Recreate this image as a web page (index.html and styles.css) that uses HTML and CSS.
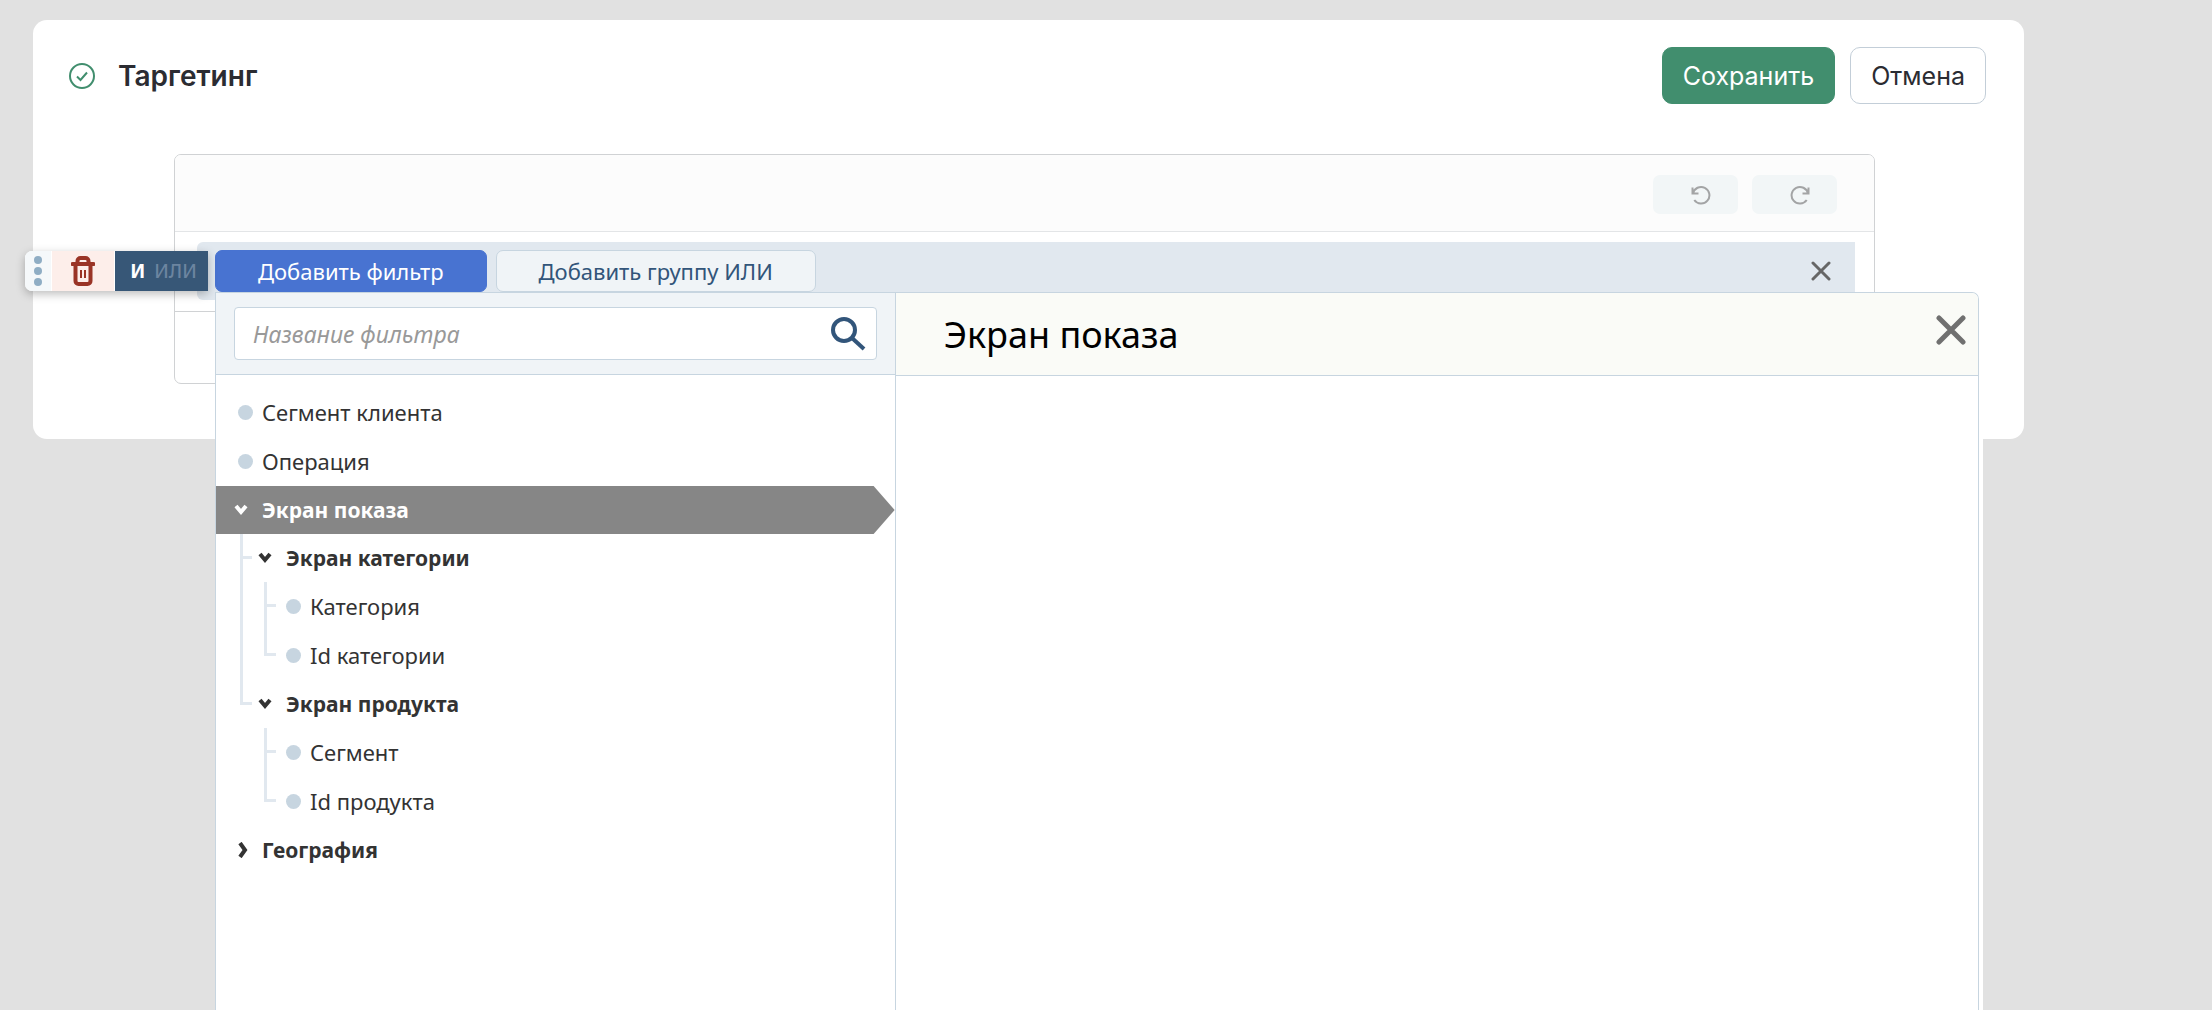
FILE: index.html
```html
<!DOCTYPE html>
<html lang="ru">
<head>
<meta charset="utf-8">
<title>Таргетинг</title>
<link rel="stylesheet" href="styles.css">
</head>
<body>
<main class="card">
  <header class="card-header">
    <svg class="status-icon" viewBox="0 0 26 26" aria-hidden="true"><circle cx="13" cy="13" r="12"/><path d="M8 13.5l3.5 3.5L18 9.5"/></svg>
    <h1 class="card-title">Таргетинг</h1>
    <div class="card-actions">
      <button class="btn btn-save" type="button">Сохранить</button>
      <button class="btn btn-cancel" type="button">Отмена</button>
    </div>
  </header>

  <section class="panel">
    <div class="panel-bar">
      <button class="history-btn" type="button" aria-label="Назад">
        <svg viewBox="0 0 20 20"><path d="M1.500 2.500v6h6M2 8.500A8.300 8.300 0 1 1 3.300 15"/></svg>
      </button>
      <button class="history-btn" type="button" aria-label="Вперёд">
        <svg viewBox="0 0 20 20"><path d="M18.500 2.500v6h-6M18 8.500A8.300 8.300 0 1 0 16.700 15"/></svg>
      </button>
    </div>

    <div class="panel-body">
      <div class="group">
        <button class="group-btn group-btn-primary" type="button">Добавить фильтр</button>
        <button class="group-btn" type="button">Добавить группу ИЛИ</button>
        <button class="group-close" type="button" aria-label="Закрыть">
          <svg viewBox="0 0 20 20"><path d="M2 2l16 16M18 2L2 18"/></svg>
        </button>

        <div class="tools">
          <button class="tool tool-grip" type="button" aria-label="Переместить">
            <svg viewBox="0 0 8 30"><circle cx="4" cy="4" r="4"/><circle cx="4" cy="15" r="4"/><circle cx="4" cy="26" r="4"/></svg>
          </button>
          <button class="tool tool-delete" type="button" aria-label="Удалить">
            <svg viewBox="0 0 24 30"><path class="bin" d="M1.500 8h21M4.500 8v17a3 3 0 0 0 3 3h9a3 3 0 0 0 3-3V8M6.500 7V5a3 3 0 0 1 3-3h5a3 3 0 0 1 3 3v2"/><path class="slats" d="M10 14v8M14 14v8"/></svg>
          </button>
          <button class="tool tool-logic" type="button"><b>И</b><span>ИЛИ</span></button>
        </div>

        <div class="picker">
          <div class="picker-side">
            <div class="search">
              <label class="search-box">
                <input class="search-input" type="text" placeholder="Название фильтра" aria-label="Название фильтра">
                <svg class="search-icon" viewBox="0 0 36 34" aria-hidden="true"><circle cx="13" cy="13" r="11"/><path d="M21 21l12 11"/></svg>
              </label>
            </div>
            <ul class="tree">
              <li><div class="row"><i class="mark dot"></i>Сегмент клиента</div></li>
              <li><div class="row"><i class="mark dot"></i>Операция</div></li>
              <li>
                <div class="row row-parent row-selected"><svg class="mark" viewBox="0 0 28 16"><path d="M2 4l5 6 5-6"/></svg>Экран показа</div>
                <ul class="branch">
                  <li>
                    <div class="row row-parent"><svg class="mark" viewBox="0 0 28 16"><path d="M2 4l5 6 5-6"/></svg>Экран категории</div>
                    <ul class="branch">
                      <li><div class="row"><i class="mark dot"></i>Категория</div></li>
                      <li><div class="row"><i class="mark dot"></i>Id категории</div></li>
                    </ul>
                  </li>
                  <li>
                    <div class="row row-parent"><svg class="mark" viewBox="0 0 28 16"><path d="M2 4l5 6 5-6"/></svg>Экран продукта</div>
                    <ul class="branch">
                      <li><div class="row"><i class="mark dot"></i>Сегмент</div></li>
                      <li><div class="row"><i class="mark dot"></i>Id продукта</div></li>
                    </ul>
                  </li>
                </ul>
              </li>
              <li><div class="row row-parent"><svg class="mark" viewBox="0 0 28 16"><path d="M6 1l5 7-5 7"/></svg>География</div></li>
            </ul>
          </div>
          <div class="picker-main">
            <header class="picker-header">
              <h2 class="picker-title">Экран показа</h2>
              <button class="picker-close" type="button" aria-label="Закрыть">
                <svg viewBox="0 0 30 30"><path d="M3 3l24 24M27 3L3 27"/></svg>
              </button>
            </header>
          </div>
        </div>
      </div>
    </div>
    <div class="panel-footer"></div>
  </section>
</main>
</body>
</html>
```
FILE: styles.css
```css
* {
  box-sizing: border-box;
}

body {
  margin: 0;
  min-height: 100vh;
  background: #e1e1e1;
  color: #333;
  font-family: "Noto Sans", sans-serif;
  font-size: 22px;
  overflow: hidden;
}

button {
  padding: 0;
  border: 0;
  background: none;
  color: inherit;
  font: inherit;
  cursor: pointer;
}

svg {
  display: block;
  fill: none;
  stroke: currentColor;
}

ul {
  margin: 0;
  padding: 0;
  list-style: none;
}

.card {
  margin: 20px 188px 0 33px;
  padding: 27px 0 55px;
  border-radius: 14px;
  background: #fff;
}

.card-header {
  display: flex;
  align-items: center;
  height: 57px;
  padding: 0 38px 0 36px;
  font-family: Inter, sans-serif;
}

.status-icon {
  width: 26px;
  height: 26px;
  color: #418e6e;
  stroke-width: 2;
}

.card-title {
  margin: 0 0 0 23px;
  color: #2b2c32;
  font-size: 28px;
  font-weight: 600;
}

.card-actions {
  display: flex;
  gap: 15px;
  margin-left: auto;
}

.btn {
  height: 57px;
  padding: 0 20px;
  border: 1px solid #c3ced8;
  border-radius: 10px;
  color: #2b2c32;
  font-size: 25px;
}

.btn-save {
  border-color: #418e6e;
  background: #418e6e;
  color: #fff;
}

.panel {
  margin: 50px 149px 0 141px;
  border: 1px solid #d0d2d4;
  border-radius: 7px;
}

.panel-bar {
  display: flex;
  align-items: center;
  justify-content: flex-end;
  gap: 14px;
  height: 77px;
  padding: 3px 37px 0 0;
  border-bottom: 1px solid #e3e5e7;
  border-radius: 6px 6px 0 0;
  background: #fcfcfc;
}

.history-btn {
  width: 85px;
  height: 39px;
  padding-left: 38px;
  border-radius: 7px;
  background: #f2f6f7;
  color: #a3a4a5;
}

.history-btn svg {
  width: 20px;
  height: 20px;
  stroke-width: 2;
}

.panel-body {
  padding: 10px 19px 11px 22px;
  border-bottom: 1px solid #d0d2d4;
}

.panel-footer {
  height: 71px;
}

.group {
  position: relative;
  display: flex;
  gap: 9px;
  height: 58px;
  padding: 8px 24px 8px 18px;
  border-radius: 6px 0 0 6px;
  background: #e1e8ef;
}

.group-btn {
  height: 42px;
  padding: 0 42px;
  border: 1px solid #c7d5e0;
  border-radius: 7px;
  background: #f0f4f7;
  color: #32557a;
}

.group-btn-primary {
  border-color: #4873d1;
  background: #4873d1;
  color: #fff;
}

.group-close {
  width: 20px;
  height: 42px;
  margin-left: auto;
  color: #666;
}

.group-close svg {
  stroke-width: 3;
  stroke-linecap: round;
}

.tools {
  position: absolute;
  top: 9px;
  left: -172px;
  display: flex;
  width: 183px;
  height: 40px;
  border-radius: 7px 0 0 7px;
  background: #fff;
  box-shadow: 0 3px 10px #0004;
}

.tool {
  display: flex;
  align-items: center;
  justify-content: center;
}

.tool-grip {
  width: 26px;
  margin-right: 1px;
  border-radius: 7px 0 0 7px;
  background: #f5f8fa;
}

.tool-grip svg {
  width: 8px;
  height: 30px;
  fill: #8fadc4;
  stroke: none;
}

.tool-delete {
  width: 62px;
  margin-right: 1px;
  background: #fdeeea;
  color: #9a3426;
}

.tool-delete svg {
  width: 24px;
  height: 30px;
}

.bin {
  stroke-width: 4;
  stroke-linecap: round;
}

.slats {
  stroke-width: 2;
}

.tool-logic {
  flex: 1;
  gap: 9px;
  padding-left: 4px;
  background: #375777;
  color: #fff;
  font-size: 19px;
}

.tool-logic span {
  color: #6c85a0;
  font-weight: 500;
}

.picker {
  position: absolute;
  top: 50px;
  right: -124px;
  left: 18px;
  display: grid;
  grid-template-columns: 27fr 43fr;
  height: calc(100vh - 292px);
  border: 1px solid #c7d5e0;
  border-bottom: 0;
  border-radius: 0 7px 0 0;
  background: #fff;
  box-shadow: 4px 0 0 #fff;
}

.picker-side {
  border-right: 1px solid #c7d5e0;
}

.search {
  height: 82px;
  padding: 14px 18px;
  border-bottom: 1px solid #c7d5e0;
  background: #f0f4f7;
}

.search-box {
  display: flex;
  align-items: center;
  height: 53px;
  padding: 0 9px 0 18px;
  border: 1px solid #c7d5e0;
  border-radius: 4px;
  background: #fff;
}

.search-input {
  flex: 1;
  min-width: 0;
  padding: 0;
  border: 0;
  outline: 0;
  background: none;
  color: #333;
  font: italic 23px "Noto Sans", sans-serif;
}

.search-input::placeholder {
  color: #999;
}

.search-icon {
  width: 36px;
  height: 34px;
  color: #32557a;
  stroke-width: 4;
}

.tree {
  padding-top: 13px;
}

.tree li + li {
  margin-top: 1px;
}

.row {
  display: flex;
  align-items: center;
  height: 48px;
  padding-left: 18px;
}

.row-parent {
  font-size: 21px;
  font-weight: 700;
}

.row-selected {
  background: #868686;
  clip-path: polygon(0 0, calc(100% - 21px) 0, 100% 50%, calc(100% - 21px) 100%, 0 100%);
  color: #fff;
}

.mark {
  width: 28px;
  height: 16px;
  stroke-width: 4;
}

.dot {
  display: flex;
  align-items: center;
  padding-left: 4px;
}

.dot::before {
  content: "";
  width: 15px;
  height: 15px;
  border-radius: 50%;
  background: #c7d5e0;
}

.branch {
  margin-left: 24px;
}

/* Guide lines that join the children of a branch */
.branch > li {
  position: relative;
}

.branch > li::before {
  content: "";
  position: absolute;
  top: 0;
  bottom: -1px;
  left: 0;
  border-left: 3px solid #e1e8ef;
}

.branch > li:last-child::before {
  bottom: auto;
  height: 25px;
}

.branch > li::after {
  content: "";
  position: absolute;
  top: 22px;
  left: 0;
  width: 12px;
  height: 3px;
  background: #e1e8ef;
}

.picker-header {
  display: flex;
  align-items: center;
  justify-content: space-between;
  height: 83px;
  padding: 0 12px 0 48px;
  border-bottom: 1px solid #c7d5e0;
  border-radius: 0 6px 0 0;
  background: #fafbf7;
}

.picker-title {
  margin: 0;
  color: #000;
  font-size: 36px;
  font-weight: 400;
}

.picker-close {
  margin-bottom: 8px;
  color: #707070;
}

.picker-close svg {
  width: 30px;
  height: 30px;
  stroke-width: 5;
  stroke-linecap: round;
}
```
